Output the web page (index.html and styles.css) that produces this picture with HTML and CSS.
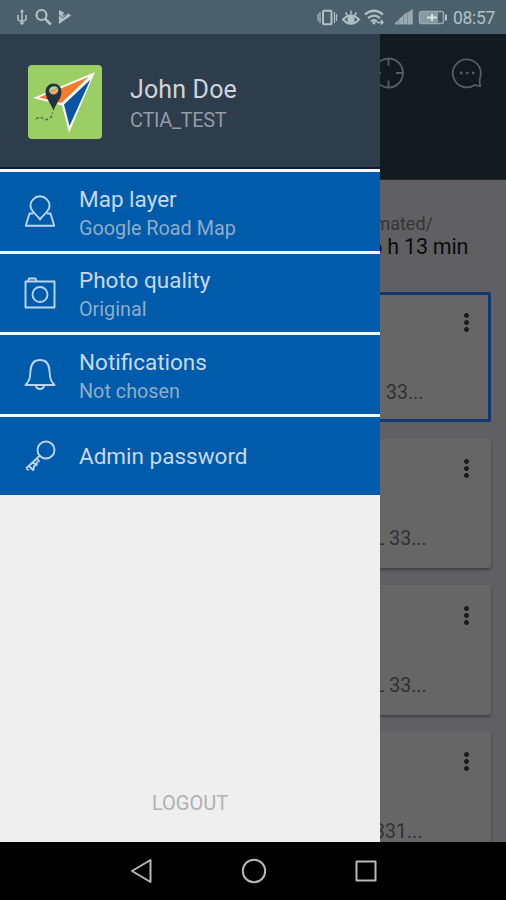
FILE: index.html
```html
<!DOCTYPE html>
<html lang="en">
<head>
<meta charset="utf-8">
<title>Navigation drawer</title>
<link rel="stylesheet" href="styles.css">
</head>
<body>
<div class="status">
  <svg class="status-left" width="60" height="20" viewBox="0 0 60 20" fill="none" stroke="currentColor" stroke-width="1.6">
    <path d="M6 4v12M2 8v4q0 2 4 2 4 0 4-2V8"/><path d="M6 2l2 3H4z" fill="currentColor" stroke="none"/><circle cx="6" cy="16" r="1.800" fill="currentColor" stroke="none"/>
    <circle cx="25.500" cy="8" r="5" stroke-width="2.200"/><path d="M29.300 12l5.500 5.500" stroke-width="2.600"/>
    <path d="M43 3l5 2.500-1.500 3.200L52.500 6.500 55 8.500 43 17z" fill="currentColor" stroke="none"/><path d="M43.500 8l3 3 5-4" stroke="#4b606a" stroke-width="1"/>
  </svg>
  <svg class="status-right" width="132" height="20" viewBox="0 0 132 20" fill="none" stroke="currentColor" stroke-width="1.600">
    <g transform="translate(1 1)">
    <rect x="6" y="2.800" width="8.500" height="13.500" rx="1" stroke-width="2"/><path d="M3 4v11M17.500 4v11M1 6v7M19.500 6v7" stroke-width="1.200"/>
    <path d="M26 11.500q8-8 16 0-8 8.500-16 0z" stroke-width="2"/><circle cx="34" cy="11.500" r="2.800" fill="currentColor"/><path d="M34 2.500v4M28.500 4.500l2 3M39.500 4.500l-2 3" stroke-width="1.500"/>
    <path d="M48 6.500q9-7.500 18 0M51 10.200q6-5 12 0M54 13.500q3-2.500 6 0" stroke-width="2.200"/><circle cx="57" cy="15" r="1.500" fill="currentColor" stroke="none"/><path d="M60 14.500h6M64 12l2 2.500-2 2" stroke-width="1.500"/>
    </g>
    <path d="M79 17.500h3.700v-5L79 16zM83 17.500h4v-9l-4 3.500zM87.300 17.500h4V5l-4 3zM91.600 17.500h5.200V2l-5.200 3.500z" fill="#98a8af" stroke="none"/>
    <rect x="103.500" y="4.500" width="24" height="12" rx="2" stroke="#98a8af" stroke-width="1.500"/><rect x="104" y="5" width="18" height="11" fill="#8999a1" stroke="none"/><path d="M130 7.500v6" stroke-width="2"/><path d="M111 10.500h10M116 7v7" stroke="#d4e1e6" stroke-width="2"/>
  </svg>
  <span class="clock">08:57</span>
</div>
<div class="stage">
  <aside class="drawer">
    <header class="profile">
      <svg class="logo" width="74" height="74" viewBox="0 0 74 74">
        <rect width="74" height="74" rx="4" fill="#9bcf66"/>
        <path d="M67 7L5 33l29 7.500L41 68z" fill="#f6f8f3"/>
        <path d="M60.500 12L11 32.500 33.500 38z" fill="#f47a2c"/>
        <path d="M62.500 14.500L36 39.500l5.500 21.500z" fill="#0a55a5"/>
        <path d="M25.500 45.500C22 37 17.500 33 17.500 26.500a8 8 0 0 1 16 0c0 6.500-4.500 10.500-8 19z" fill="#20343f"/>
        <path d="M25.500 21.500a4.500 4.500 0 0 0-4.500 5l9-3.500a4.500 4.500 0 0 0-4.500-1.500z" fill="#b4d68b"/>
        <path d="M21 26.500l9-3.500a4.500 4.500 0 1 1-9 3.500z" fill="#f3a167"/>
        <path d="M8 54q4-3 7-.5t6 0q3.500-1.500 3.500-6" fill="none" stroke="#486a3d" stroke-width="1.300" stroke-dasharray="3 2"/>
      </svg>
      <div class="identity">
        <div class="name">John Doe</div>
        <div class="account">CTIA_TEST</div>
      </div>
    </header>
    <nav class="menu">
      <div class="item">
        <svg class="icon" viewBox="0 0 32 32"><path d="M16 24.500C13 19.500 6.500 17 6.500 10.800a9.500 9.500 0 0 1 19 0C25.500 17 19 19.500 16 24.500z"/><path d="M9 18.500H5.500L1.800 30.800h28.400L26.500 18.500H23"/></svg>
        <div class="labels"><div class="title">Map layer</div><div class="sub">Google Road Map</div></div>
      </div>
      <div class="item">
        <svg class="icon" viewBox="0 0 32 32"><path d="M1.500 4.500h29v26h-29zM4 4.500l1-3h6.500l1 3"/><circle cx="16" cy="17.500" r="7.500"/></svg>
        <div class="labels"><div class="title">Photo quality</div><div class="sub">Original</div></div>
      </div>
      <div class="item">
        <svg class="icon" viewBox="0 0 32 32"><path d="M1.500 27C6 22.500 6 19.500 6.500 12.500 7 5.500 10.500 2 16 2s9 3.500 9.500 10.500c.5 7 .5 10 5 14.500zM12 27.500q.5 3.500 4 3.500t4-3.500"/></svg>
        <div class="labels"><div class="title">Notifications</div><div class="sub">Not chosen</div></div>
      </div>
      <div class="item">
        <svg class="icon" viewBox="0 0 32 32"><circle cx="22" cy="10" r="8.500"/><path d="M15.500 16L2 28.500M5 26l4.500 4.500M9 22l3.500 4M13 18.500l2.500 3.500M2 28.500l3 1.500M9.500 30.500l.5-5M12.500 26l.5-4.500"/></svg>
        <div class="labels single"><div class="title">Admin password</div></div>
      </div>
    </nav>
    <div class="logout">LOGOUT</div>
  </aside>
  <main class="page">
    <div class="toolbar">
      <svg width="110" height="34" viewBox="0 0 110 34" fill="none" stroke="#565c60" stroke-width="1.800">
        <circle cx="8.500" cy="17" r="14.500"/><path d="M8.500 2.500v7M8.500 24.500v7M16 17h7M-6 17h7"/>
        <path d="M95 28.700A14 14 0 1 1 100 22q-1 4 .2 8.200-2.500 0-5.200-1.500"/>
        <path d="M80 17h2.500M86 17h2.500M92 17h2.500" stroke-width="2.500"/>
      </svg>
    </div>
    <div class="summary"><div class="estimate">estimated/</div><div class="duration">6 h 13 min</div></div>
    <div class="cards">
      <div class="card selected"><i class="dots"></i><span class="zip first">33...</span></div>
      <div class="card"><i class="dots"></i><span class="zip">L 33...</span></div>
      <div class="card"><i class="dots"></i><span class="zip">L 33...</span></div>
      <div class="card"><i class="dots"></i><span class="zip last">331...</span></div>
    </div>
  </main>
</div>
<footer class="navbar">
  <svg width="24" height="28" viewBox="0 0 24 28"><path d="M2 14L20.500 3v22z"/></svg>
  <svg width="28" height="28" viewBox="0 0 28 28"><circle cx="14" cy="14" r="11.200"/></svg>
  <svg width="24" height="28" viewBox="0 0 24 28"><path d="M2.500 4.500h19v19h-19z"/></svg>
</footer>
</body>
</html>
```
FILE: styles.css
```css
* { box-sizing: border-box; }
body { margin: 0; width: 506px; height: 900px; overflow: hidden; font-family: Roboto, sans-serif; background: #000; }
svg { display: block; flex: none; }

.status { height: 34px; background: #4b606a; color: #b0c0c8; display: flex; align-items: center; padding: 0 11px 0 16px; }
.status-right { margin-left: auto; margin-right: 5px; }
.clock { width: 42px; font-size: 17.5px; line-height: 20px; letter-spacing: -0.3px; white-space: nowrap; padding-top: 2px; }

.stage { height: 808px; display: grid; grid-template-columns: 380px 126px; }
.drawer { height: 808px; background: #efefef; display: flex; flex-direction: column; overflow: hidden; }
.profile { height: 135px; background: #2e3d4c; border-bottom: 2px solid #101b33; display: flex; align-items: center; gap: 28px; padding: 2px 0 0 28px; flex: none; }
.identity { padding-top: 7px; }
.name { color: #ced4df; font-size: 25px; line-height: 30px; letter-spacing: 0.15px; }
.account { color: #929ba6; font-size: 20px; line-height: 30px; letter-spacing: -0.35px; }
.menu { flex: none; background: #005baa; }
.item { height: 81.500px; border-top: 3px solid #f3f8fc; display: flex; align-items: center; gap: 23px; padding-left: 24px; }
.icon { width: 32px; height: 32px; fill: none; stroke: #bdd5f0; stroke-width: 1.900; stroke-linejoin: round; }
.labels { padding-top: 5px; }
.single { padding-top: 2px; }
.title { color: #c8d9f1; font-size: 22.500px; line-height: 29px; white-space: nowrap; }
.sub { color: #8eadc9; font-size: 19.800px; line-height: 29px; white-space: nowrap; }
.logout { margin-top: auto; margin-bottom: 24px; line-height: 30px; text-align: center; font-size: 20px; color: #b1b1b1; }

.page { background: #606062; overflow: hidden; height: 808px; }
.toolbar { height: 146px; background: #12191f; border-bottom: 1px solid #25292c; padding-top: 22px; }
.summary { height: 112px; padding-top: 32px; display: flex; flex-direction: column; align-items: flex-end; white-space: nowrap; }
.estimate { color: #353537; font-size: 18px; line-height: 23px; margin-right: 73px; }
.duration { color: #0b0c0d; font-size: 21.500px; line-height: 23px; letter-spacing: -0.25px; margin-right: 38px; }
.cards { display: flex; flex-direction: column; gap: 16.300px; }
.card { height: 130px; width: 111px; flex: none; background: #666; border-radius: 0 3px 3px 0; box-shadow: 0 2px 3px #404042; display: flex; flex-direction: column; justify-content: space-between; padding: 21px 22px 17px 0; overflow: hidden; }
.selected { border: 3px solid #12386f; border-left: 0; padding: 18px 19px 14px 0; box-shadow: none; }
.dots { width: 5px; height: 19px; align-self: flex-end; background: radial-gradient(circle at 2.500px 2.500px, #171d21 2.100px, transparent 2.800px) 0 0 / 5px 7px; }
.zip { color: #313133; font-size: 19.500px; line-height: 24px; margin-left: -6px; white-space: nowrap; }
.first { margin-left: 6px; }
.last { margin-left: -6px; }

.navbar { height: 58px; background: #000; display: flex; align-items: center; padding-left: 130px; gap: 86px; }
.navbar svg { fill: none; stroke: #b9b9b9; stroke-width: 2; stroke-linejoin: round; }
```
